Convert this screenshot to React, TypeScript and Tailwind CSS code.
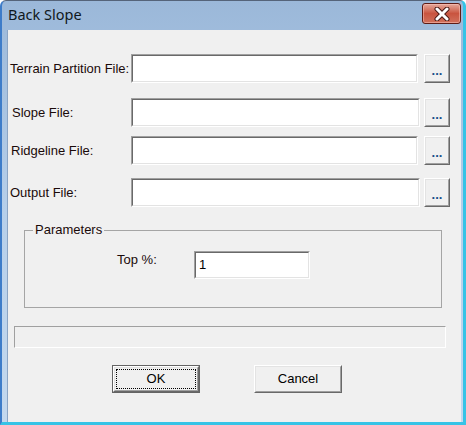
import React from "react";

const font = { fontFamily: '"Liberation Sans", Arial, sans-serif' };

function Sunken({ w, h, children }: { w: string; h: string; children?: React.ReactNode }) {
  return (
    <div className={`${w} ${h} border border-t-[#a0a0a0] border-l-[#a0a0a0] border-b-white border-r-white shrink-0`}>
      <div className="w-full h-full border border-t-[#696969] border-l-[#696969] border-b-[#e3e3e3] border-r-[#e3e3e3] bg-white flex items-center pl-[2px] text-[13px] text-black">
        {children}
      </div>
    </div>
  );
}

function BrowseBtn() {
  return (
    <div className="w-[26px] h-[29px] border border-t-white border-l-white border-b-[#696969] border-r-[#696969] shrink-0">
      <div className="w-full h-full border border-t-[#e3e3e3] border-l-[#e3e3e3] border-b-[#a0a0a0] border-r-[#a0a0a0] bg-[#f0f0f0] flex items-center justify-center">
        <span className="text-[13px] font-bold text-[#1a4f8a] leading-none mt-[3px]">...</span>
      </div>
    </div>
  );
}

function Row({ label, mt, inputW, labelClass = "" }: { label: string; mt: string; inputW: string; labelClass?: string }) {
  return (
    <div className={`flex items-center ${mt}`}>
      <div className={`w-[122px] shrink-0 text-[13px] text-[#1a0a0a] whitespace-nowrap ${labelClass}`}>{label}</div>
      <Sunken w={inputW} h="h-[29px]" />
      <div className="flex-1" />
      <BrowseBtn />
    </div>
  );
}

function DlgButton({ children, isDefault = false }: { children: React.ReactNode; isDefault?: boolean }) {
  if (isDefault) {
    return (
      <div className="w-[88px] h-[28px] border border-[#646464]">
        <div className="w-full h-full border border-t-white border-l-white border-b-[#696969] border-r-[#696969]">
          <div className="w-full h-full border border-t-[#e3e3e3] border-l-[#e3e3e3] border-b-[#a0a0a0] border-r-[#a0a0a0] bg-[#f0f0f0] p-[1px]">
            <div className="w-full h-full border border-dotted border-black flex items-center justify-center text-[13px] text-black">
              {children}
            </div>
          </div>
        </div>
      </div>
    );
  }
  return (
    <div className="w-[88px] h-[28px] border border-t-white border-l-white border-b-[#696969] border-r-[#696969]">
      <div className="w-full h-full border border-t-[#e3e3e3] border-l-[#e3e3e3] border-b-[#a0a0a0] border-r-[#a0a0a0] bg-[#f0f0f0] flex items-center justify-center text-[13px] text-black">
        {children}
      </div>
    </div>
  );
}

export default function App() {
  return (
    <div
      className="w-[466px] h-[425px] flex flex-col bg-gradient-to-b from-[#9bb8d9] via-[#b6cfea] to-[#c3d8ee] rounded-tl-[6px] rounded-tr-[6px] border-l-2 border-l-[#3d7cc9] border-r-[3px] border-r-[#36c3e6] border-b-[3px] border-b-[#36c3e6] border-t border-t-[#55647a] overflow-hidden"
      style={font}
    >
      {/* title bar */}
      <div className="h-[29px] flex items-center shrink-0 pl-[6px] pr-[2px]">
        <div className="text-[14.5px] text-[#101820] mt-[-2px]" style={{ fontFamily: '"Noto Sans", "Open Sans", sans-serif' }}>
          Back Slope
        </div>
        <div className="flex-1" />
        <div className="w-[39px] h-[21px] mt-[-4px] rounded-[3px] border border-[#5e1c16] bg-gradient-to-b from-[#e4a89c] via-[#c9543f] to-[#d0705c] flex items-center justify-center shadow-[inset_0_0_0_1px_rgba(255,200,190,0.5)]">
          <svg width="16" height="14" viewBox="0 0 16 14">
            <path d="M3 2 L13 12 M13 2 L3 12" stroke="#4a1a16" strokeWidth="5" strokeLinecap="round" />
            <path d="M3 2 L13 12 M13 2 L3 12" stroke="#ffffff" strokeWidth="3" strokeLinecap="round" />
          </svg>
        </div>
      </div>

      {/* client area */}
      <div className="flex-1 ml-[5px] mr-[2px] bg-[#f0f0f0] border-l border-l-[#8aa4c4] flex flex-col pl-[1px] pr-[11px]">
        <Row label="Terrain Partition File:" mt="mt-[24px]" inputW="w-[287px]" labelClass="pl-[1px]" />
        <Row label="Slope File:" mt="mt-[15px]" inputW="w-[289px]" labelClass="pl-[3px]" />
        <Row label="Ridgeline File:" mt="mt-[9px]" inputW="w-[287px]" labelClass="pl-[2px]" />
        <Row label="Output File:" mt="mt-[13px]" inputW="w-[289px]" labelClass="pl-[1px]" />

        <fieldset className="mt-[15px] ml-[15px] w-[418px] h-[86px] border border-[#a5a5a5] px-0 pt-0 pb-0 m-0 min-w-0">
          <legend className="ml-[8px] px-[2px] text-[13px] text-[#1a0a0a] leading-[16px]">Parameters</legend>
          <div className="flex items-center mt-[13px]">
            <div className="w-[77px] shrink-0 ml-[92px] text-[13px] text-[#1a0a0a] mt-[-10px]">Top %:</div>
            <Sunken w="w-[116px]" h="h-[28px]">
              <span className="ml-[1px]">1</span>
            </Sunken>
          </div>
        </fieldset>

        <div className="mt-[18px] ml-[5px] w-[432px] h-[22px] border border-t-[#a0a0a0] border-l-[#a0a0a0] border-b-white border-r-white bg-[#f0f0f0]" />

        <div className="mt-[17px] flex">
          <div className="ml-[103px]">
            <DlgButton isDefault>OK</DlgButton>
          </div>
          <div className="ml-[54px]">
            <DlgButton>Cancel</DlgButton>
          </div>
        </div>
      </div>
    </div>
  );
}
